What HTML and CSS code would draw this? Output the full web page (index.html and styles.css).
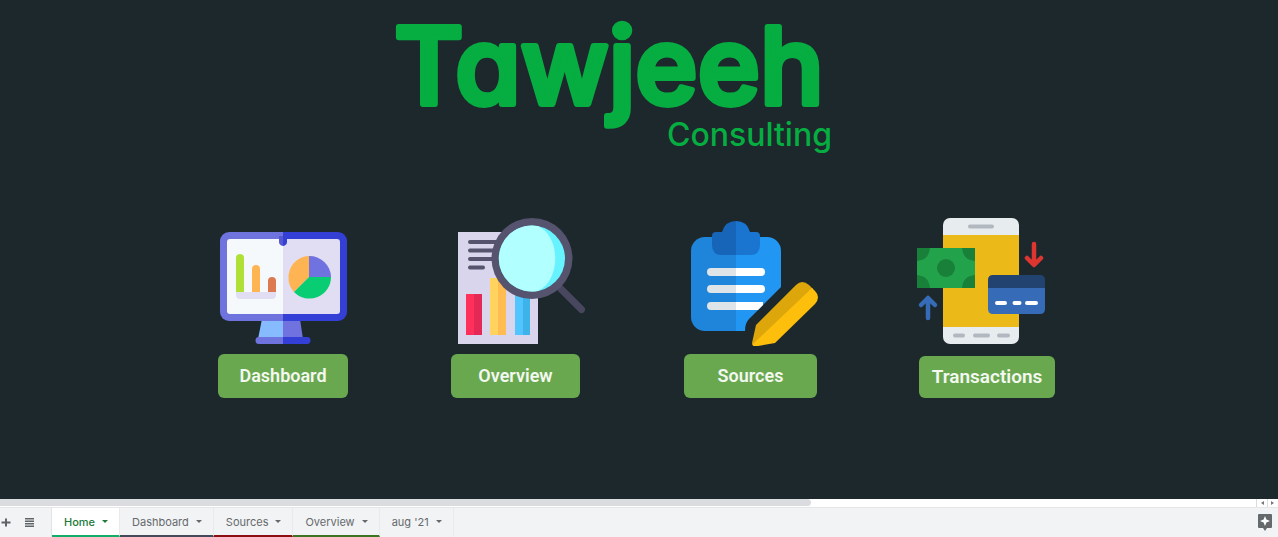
FILE: index.html
```html
<!DOCTYPE html>
<html lang="en">
<head>
<meta charset="utf-8">
<meta name="viewport" content="width=device-width, initial-scale=1">
<title>Tawjeeh Consulting</title>
<link rel="stylesheet" href="styles.css">
</head>
<body>
<main class="sheet">
  <h1 class="brand">
    <svg class="brand-mark" width="452" height="140" viewBox="0 0 452 140">
      <text class="brand-name" x="226" y="86" text-anchor="middle">Tawjeeh</text>
      <text class="brand-sub" x="449" y="128" text-anchor="end">Consulting</text>
    </svg>
  </h1>
  <nav class="cards" aria-label="Sections">
    <div class="card card-dashboard">
      <svg class="card-icon" width="128" height="128" viewBox="0 0 128 128" aria-hidden="true">
        <path fill="#87bbff" d="M43 101h22v20H39z"/>
        <path fill="#7072df" d="M64 101h17l3 20H64z"/>
        <path fill="#6e73dd" d="M64 14H10a9 9 0 0 0-9 9v71a9 9 0 0 0 9 9h54z"/>
        <path fill="#343fd5" d="M64 14h55a9 9 0 0 1 9 9v71a9 9 0 0 1-9 9H64z"/>
        <path fill="#f5f9fc" d="M64 21H11q-3 0-3 3v69q0 3 3 3h53z"/>
        <path fill="#e1ddf2" d="M64 21h54q3 0 3 3v69q0 3-3 3H64z"/>
        <path fill="#5558ce" d="M60 18h4v10q-4-1-4-4z"/>
        <path fill="#343fd5" d="M64 18h4v6q0 3-4 4z"/>
        <path fill="#6e73dd" d="M64 119H40a3 3 0 0 0 0 7h24z"/>
        <path fill="#343fd5" d="M64 119h24a3 3 0 0 1 0 7H64z"/>
        <path fill="#b0df35" d="M17 74V40a4 4 0 0 1 8 0v34z"/>
        <path fill="#ffb454" d="M33 74V51a4 4 0 0 1 8 0v23z"/>
        <path fill="#dd7950" d="M49 74V63a4 4 0 0 1 8 0v11z"/>
        <path fill="#e1ddf2" d="M17 74h40v3q0 4-4 4H21q-4 0-4-4z"/>
        <path fill="#ffb454" d="M90 59V38A21.500 21.500 0 0 0 75 74z"/>
        <path fill="#7072df" d="M90 59V38a21.500 21.500 0 0 1 22 21z"/>
        <path fill="#08cd72" d="M90 59h22a21.500 21.500 0 0 1-37 15z"/>
      </svg>
      <button class="go go-dashboard" type="button">Dashboard</button>
    </div>
    <div class="card card-end">
      <svg class="card-icon" width="128" height="128" viewBox="0 0 128 128" aria-hidden="true">
        <path fill="#d8d5ec" d="M1 14h80v112H1z"/>
        <path stroke="#55536e" stroke-width="4" stroke-linecap="round" d="M13 24h27M13 32.500h24M13 41h24M13 49.500h13"/>
        <path fill="#ff315a" d="M9 76h8v41H9z"/><path fill="#e52956" d="M17 76h8v41h-8z"/>
        <path fill="#ffd35d" d="M33 60h8v57h-8z"/><path fill="#ffbc50" d="M41 60h8v57h-8z"/>
        <path fill="#51c5ff" d="M58 76h8v41h-8z"/><path fill="#3db3e7" d="M66 76h7v41h-7z"/>
        <path stroke="#494760" stroke-width="7" stroke-linecap="round" d="M101 68l23.500 23.500"/>
        <circle cx="75" cy="40.500" r="40.500" fill="#55536e"/>
        <circle cx="75" cy="40.500" r="33" fill="#66f3ff"/>
        <path fill="#b2ffff" d="M81 8.100A33 33 0 1 0 81 72.900C104 62.500 104 18.500 81 8.100z"/>
      </svg>
      <button class="go go-overview" type="button">Overview</button>
    </div>
    <div class="card card-end">
      <svg class="card-icon" width="128" height="128" viewBox="0 0 128 128" aria-hidden="true">
        <path fill="#1f85da" d="M46 19H15A14 14 0 0 0 1 33v66a14 14 0 0 0 14 14h31z"/>
        <path fill="#2196f3" d="M46 19h31a14 14 0 0 1 14 14v36L59 101q-4 4-4 12h-9z"/>
        <path fill="#1765b9" d="M46 3q-11 0-14 11h-6q-4 0-4 4v9q0 10 10 10h14z"/>
        <path fill="#1a75d1" d="M46 3q11 0 14 11h6q4 0 4 4v9q0 10-10 10H46z"/>
        <path fill="#dfe4e9" d="M46 50H21a4 4 0 0 0 0 8h25zM46 67H21a4 4 0 0 0 0 8h25zM46 84H21a4 4 0 0 0 0 8h25z"/>
        <path fill="#fff" d="M46 50h25a4 4 0 0 1 0 8H46zM46 67h25a4 4 0 0 1 0 8H46zM46 84h27v3l-5 5H46z"/>
        <path fill="#dda70b" d="M106 67q6-6 13 0l4 4-58 56q-3 2-3-2l4-18z"/>
        <path fill="#fdbf0b" d="M122 70l3 3q6 6 0 13l-40 39-17 3q-6 1-5-2z"/>
      </svg>
      <button class="go go-sources" type="button">Sources</button>
    </div>
    <div class="card card-transactions">
      <svg class="card-icon" width="128" height="128" viewBox="0 0 128 128" aria-hidden="true">
        <rect x="26" y="0" width="76" height="126" rx="7" fill="#e7ecee"/>
        <path fill="#ebb918" d="M26 17h76v92H26z"/>
        <path stroke="#b2b8bf" stroke-width="4" stroke-linecap="round" d="M53 8.500h22M38 117.500h8M58 117.500h13M82 117.500h9"/>
        <path fill="#22a34b" d="M0 30h58v40H0z"/>
        <path fill="#188038" d="M0 30h13Q12 42 0 43zM58 30H45q1 12 13 13zM0 70h13Q12 58 0 57zM58 70H45q1-12 13-13z"/>
        <circle cx="29" cy="50" r="9" fill="#188038"/>
        <path fill="#224370" d="M71 70v-8q0-5 5-5h47q5 0 5 5v8z"/>
        <path fill="#366bb8" d="M71 70h57v21q0 5-5 5H76q-5 0-5-5z"/>
        <path stroke="#fff" stroke-width="4" stroke-linecap="round" d="M80 85h8M97.500 85h5M110 85h9"/>
        <path fill="none" stroke="#dd3631" stroke-width="4.500" stroke-linecap="round" stroke-linejoin="round" d="M117 26v20M110 40l7 7 7-7"/>
        <path fill="none" stroke="#366bb8" stroke-width="4.500" stroke-linecap="round" stroke-linejoin="round" d="M11 100V80M4 87l7-7 7 7"/>
      </svg>
      <button class="go go-transactions" type="button">Transactions</button>
    </div>
  </nav>
</main>
<div class="scroller">
  <div class="track"><div class="thumb"></div></div>
  <button class="step" type="button" aria-label="Scroll left"><svg width="4" height="6" viewBox="0 0 4 6"><path fill="#777" d="M4 1v4L1 3z"/></svg></button>
  <button class="step" type="button" aria-label="Scroll right"><svg width="4" height="6" viewBox="0 0 4 6"><path fill="#777" d="M0 1v4l3-2z"/></svg></button>
</div>
<footer class="tabbar">
  <button class="tool" type="button" aria-label="Add sheet"><svg width="12" height="12" viewBox="0 0 12 12"><path stroke="#616467" stroke-width="2" d="M1.500 5.500h9M6 1.500v8"/></svg></button>
  <button class="tool tool-list" type="button" aria-label="All sheets"><svg width="10" height="10" viewBox="0 0 10 10"><path stroke="#616467" stroke-width="1.500" d="M1 .8h9M1 3.300h9M1 5.800h9M1 8.300h9"/></svg></button>
  <div class="tabs">
    <button class="tab tab-home" type="button">Home<span class="caret"></span></button>
    <button class="tab tab-dashboard" type="button">Dashboard<span class="caret"></span></button>
    <button class="tab tab-sources" type="button">Sources<span class="caret"></span></button>
    <button class="tab tab-overview" type="button">Overview<span class="caret"></span></button>
    <button class="tab" type="button">aug '21<span class="caret"></span></button>
  </div>
  <button class="tool explore" type="button" aria-label="Explore"><svg width="14" height="17" viewBox="0 0 14 17"><path fill="#66696c" d="M1 0h12q1 0 1 1v12q0 1-1 1H9l-2 3-2-3H1q-1 0-1-1V1q0-1 1-1z"/><path fill="#fff" d="M7 2l1.400 3.600L12 7 8.400 8.400 7 12 5.600 8.400 2 7l3.600-1.400z"/></svg></button>
</footer>
</body>
</html>
```

FILE: styles.css
```css
* { box-sizing: border-box; }

body {
  margin: 0;
  min-height: 100vh;
  display: flex;
  flex-direction: column;
  background: #1d282c;
  font-family: Inter, "Liberation Sans", sans-serif;
}

button {
  border: 0;
  padding: 0;
  background: none;
  font: inherit;
  cursor: pointer;
}

svg { display: block; }

.sheet {
  flex: 1;
  display: flex;
  flex-direction: column;
  align-items: center;
  padding: 18px 5px 0 0;
}

.brand {
  margin: 0;
  padding-right: 56px;
  line-height: 1;
}

.brand-mark { overflow: visible; }

.brand-name {
  font-size: 106px;
  font-weight: 500;
  font-feature-settings: "cv11";
  fill: #06ad41;
  stroke: #06ad41;
  stroke-width: 6px;
  stroke-linejoin: round;
}

.brand-sub {
  font-size: 32px;
  font-weight: 500;
  fill: #06ad41;
}

.cards {
  display: grid;
  grid-template-columns: repeat(4, 138px);
  column-gap: 95px;
  margin-top: 60px;
}

.card {
  justify-self: start;
  display: flex;
  flex-direction: column;
  justify-content: space-between;
  height: 180px;
}

.card-dashboard { align-items: center; }
.card-end { align-items: flex-end; }
.card-end .go { align-self: flex-start; }

.go {
  height: 44px;
  border-radius: 6px;
  background: #6aa84f;
  color: #f3f8f0;
  font: 600 18px/44px Roboto, sans-serif;
}

.go-dashboard { width: 130px; }
.go-overview { width: 129px; margin-right: 5px; }
.go-sources { width: 133px; margin-right: 1px; }
.go-transactions { width: 136px; height: 42px; margin-left: 2px; font-size: 19px; line-height: 42px; }

.scroller {
  display: flex;
  height: 9px;
  background: #fff;
  border-bottom: 1px solid #e4e6e8;
}

.track { flex: 1; }

.thumb {
  width: 64.6%;
  height: 7px;
  border-radius: 0 4px 4px 0;
  background: #dadce0;
}

.step {
  width: 11px;
  border-left: 1px solid #dadce0;
  display: grid;
  place-items: center;
}

.tabbar {
  display: flex;
  align-items: center;
  height: 29px;
  background: #f1f3f4;
}

.tool { width: 12px; display: grid; place-items: center; }
.tool-list { margin-left: 11px; }
.explore { width: 14px; margin-left: auto; margin-right: 6px; }

.tabs {
  display: flex;
  align-self: stretch;
  margin-left: 16px;
  border-left: 1px solid #e1e3e4;
}

.tab {
  display: flex;
  align-items: center;
  gap: 7px;
  padding: 0 11px 0 12px;
  border-right: 1px solid #e8eaeb;
  border-bottom: 2px solid transparent;
  color: #66696c;
  font-size: 11px;
  font-weight: 400;
}

.tab-home { background: #fff; color: #217a3b; font-weight: 500; border-bottom-color: #12ae67; }
.tab-dashboard { border-bottom-color: #434b5a; }
.tab-sources { border-bottom-color: #8e0f12; }
.tab-overview { border-bottom-color: #3b7522; }

.caret {
  border: 3px solid transparent;
  border-top-color: currentColor;
  border-bottom: 0;
}
```
